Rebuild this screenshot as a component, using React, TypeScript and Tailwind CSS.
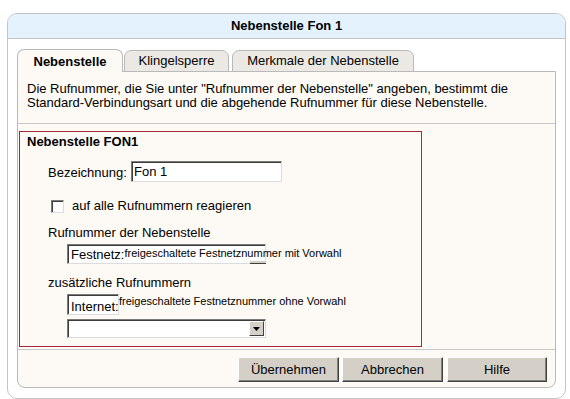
import React from "react";

const inset =
  "border border-t-[#7a7a7a] border-l-[#7a7a7a] border-r-[#dcdcdc] border-b-[#dcdcdc] shadow-[inset_1px_1px_0_#3c3c3c] bg-white";

const btn =
  "h-[25px] bg-[#d4d0c8] border border-t-white border-l-white border-r-[#404040] border-b-[#404040] shadow-[inset_-1px_-1px_0_#808080] text-[13px] leading-none flex items-center justify-center";

export default function App() {
  return (
    <div className="w-[570px] h-[399px] bg-white pt-[13px] pl-[7px] font-['Liberation_Sans',Arial,sans-serif] text-[13px] text-black">
      <div className="w-[559px] h-[386px] border border-[#c4c4c4] rounded-[10px] overflow-hidden flex flex-col">
        <div className="h-[25px] bg-[#e3f2fc] border-b border-[#c4c4c4] flex items-center justify-center font-bold">
          Nebenstelle Fon 1
        </div>
        <div className="pl-[9px] pt-[10px]">
          <div className="flex items-end h-[23px] -mb-px relative z-10">
            <div className="w-[106px] h-[23px] bg-[#fdfaf5] border border-b-0 border-[#b9b9b9] rounded-t-[7px] flex items-center justify-center font-bold pt-[1px]">
              Nebenstelle
            </div>
            <div className="ml-[1px] w-[105px] h-[22px] bg-[#ece9e4] border border-[#b9b9b9] rounded-t-[7px] flex items-center justify-center">
              Klingelsperre
            </div>
            <div className="ml-[3px] w-[182px] h-[22px] bg-[#ece9e4] border border-[#b9b9b9] rounded-t-[7px] flex items-center justify-center">
              Merkmale der Nebenstelle
            </div>
          </div>
          <div className="w-[539px] h-[317px] border border-[#b9b9b9] rounded-b-[8px] bg-[#fdfaf5] flex flex-col">
            <p className="px-[9px] pt-[10px] pb-[13px] leading-[14px] border-b border-[#c8c8c8]">
              Die Rufnummer, die Sie unter "Rufnummer der Nebenstelle" angeben, bestimmt die
              <br />
              Standard-Verbindungsart und die abgehende Rufnummer für diese Nebenstelle.
            </p>

            <div className="ml-px mt-[7px] w-[403px] h-[216px] border border-[#a8283a] flex flex-col leading-[14px]">
              <div className="pl-[7px] pt-[3px] font-bold">Nebenstelle FON1</div>

              <div className="mt-[12px] pl-[28px] flex items-center">
                <span className="w-[83px] pt-[3px]">Bezeichnung:</span>
                <div className={`w-[151px] h-[21px] ${inset} pl-[2px] pt-[1px] flex items-center`}>Fon 1</div>
              </div>

              <div className="mt-[17px] pl-[31px] flex items-center">
                <div className={`w-[13px] h-[13px] ${inset}`} />
                <span className="ml-[8px]">auf alle Rufnummern reagieren</span>
              </div>

              <div className="mt-[13px] pl-[28px]">Rufnummer der Nebenstelle</div>

              <div className={`mt-[4px] ml-[47px] w-[199px] h-[20px] ${inset} relative flex items-start whitespace-nowrap`}>
                <span className="pl-[3px] pt-[3px]">Festnetz:</span>
                <span className="text-[11px] leading-[12px] pt-[2px]">freigeschaltete Festnetznummer mit Vorwahl</span>
                <div className="absolute right-[-1px] bottom-[-1px] w-[16px] h-[3px] bg-[#d4d0c8] border-b border-[#404040]" />
              </div>

              <div className="mt-[12px] pl-[28px]">zusätzliche Rufnummern</div>

              <div className="mt-[4px] ml-[47px] flex items-start whitespace-nowrap">
                <div className={`w-[52px] h-[21px] ${inset} pl-[3px] pt-[5px]`}>Internet:</div>
                <span className="text-[11px] leading-[12px] pt-[1px]">freigeschaltete Festnetznummer ohne Vorwahl</span>
              </div>

              <div className={`mt-[4px] ml-[47px] w-[199px] h-[19px] ${inset} flex justify-end items-center pr-[1px]`}>
                <div className="w-[15px] h-[15px] bg-[#d4d0c8] border border-t-white border-l-white border-r-[#404040] border-b-[#404040] flex items-center justify-center">
                  <svg width="7" height="4" viewBox="0 0 7 4">
                    <path d="M0 0h7L3.5 4z" fill="#000" />
                  </svg>
                </div>
              </div>
            </div>

            <div className="mt-[2px] border-t border-[#c8c8c8] flex justify-end pr-[8px] pt-[7px]">
              <div className={`${btn} w-[101px]`}>Übernehmen</div>
              <div className={`${btn} w-[101px] ml-[3px]`}>Abbrechen</div>
              <div className={`${btn} w-[100px] ml-[4px]`}>Hilfe</div>
            </div>
          </div>
        </div>
      </div>
    </div>
  );
}
